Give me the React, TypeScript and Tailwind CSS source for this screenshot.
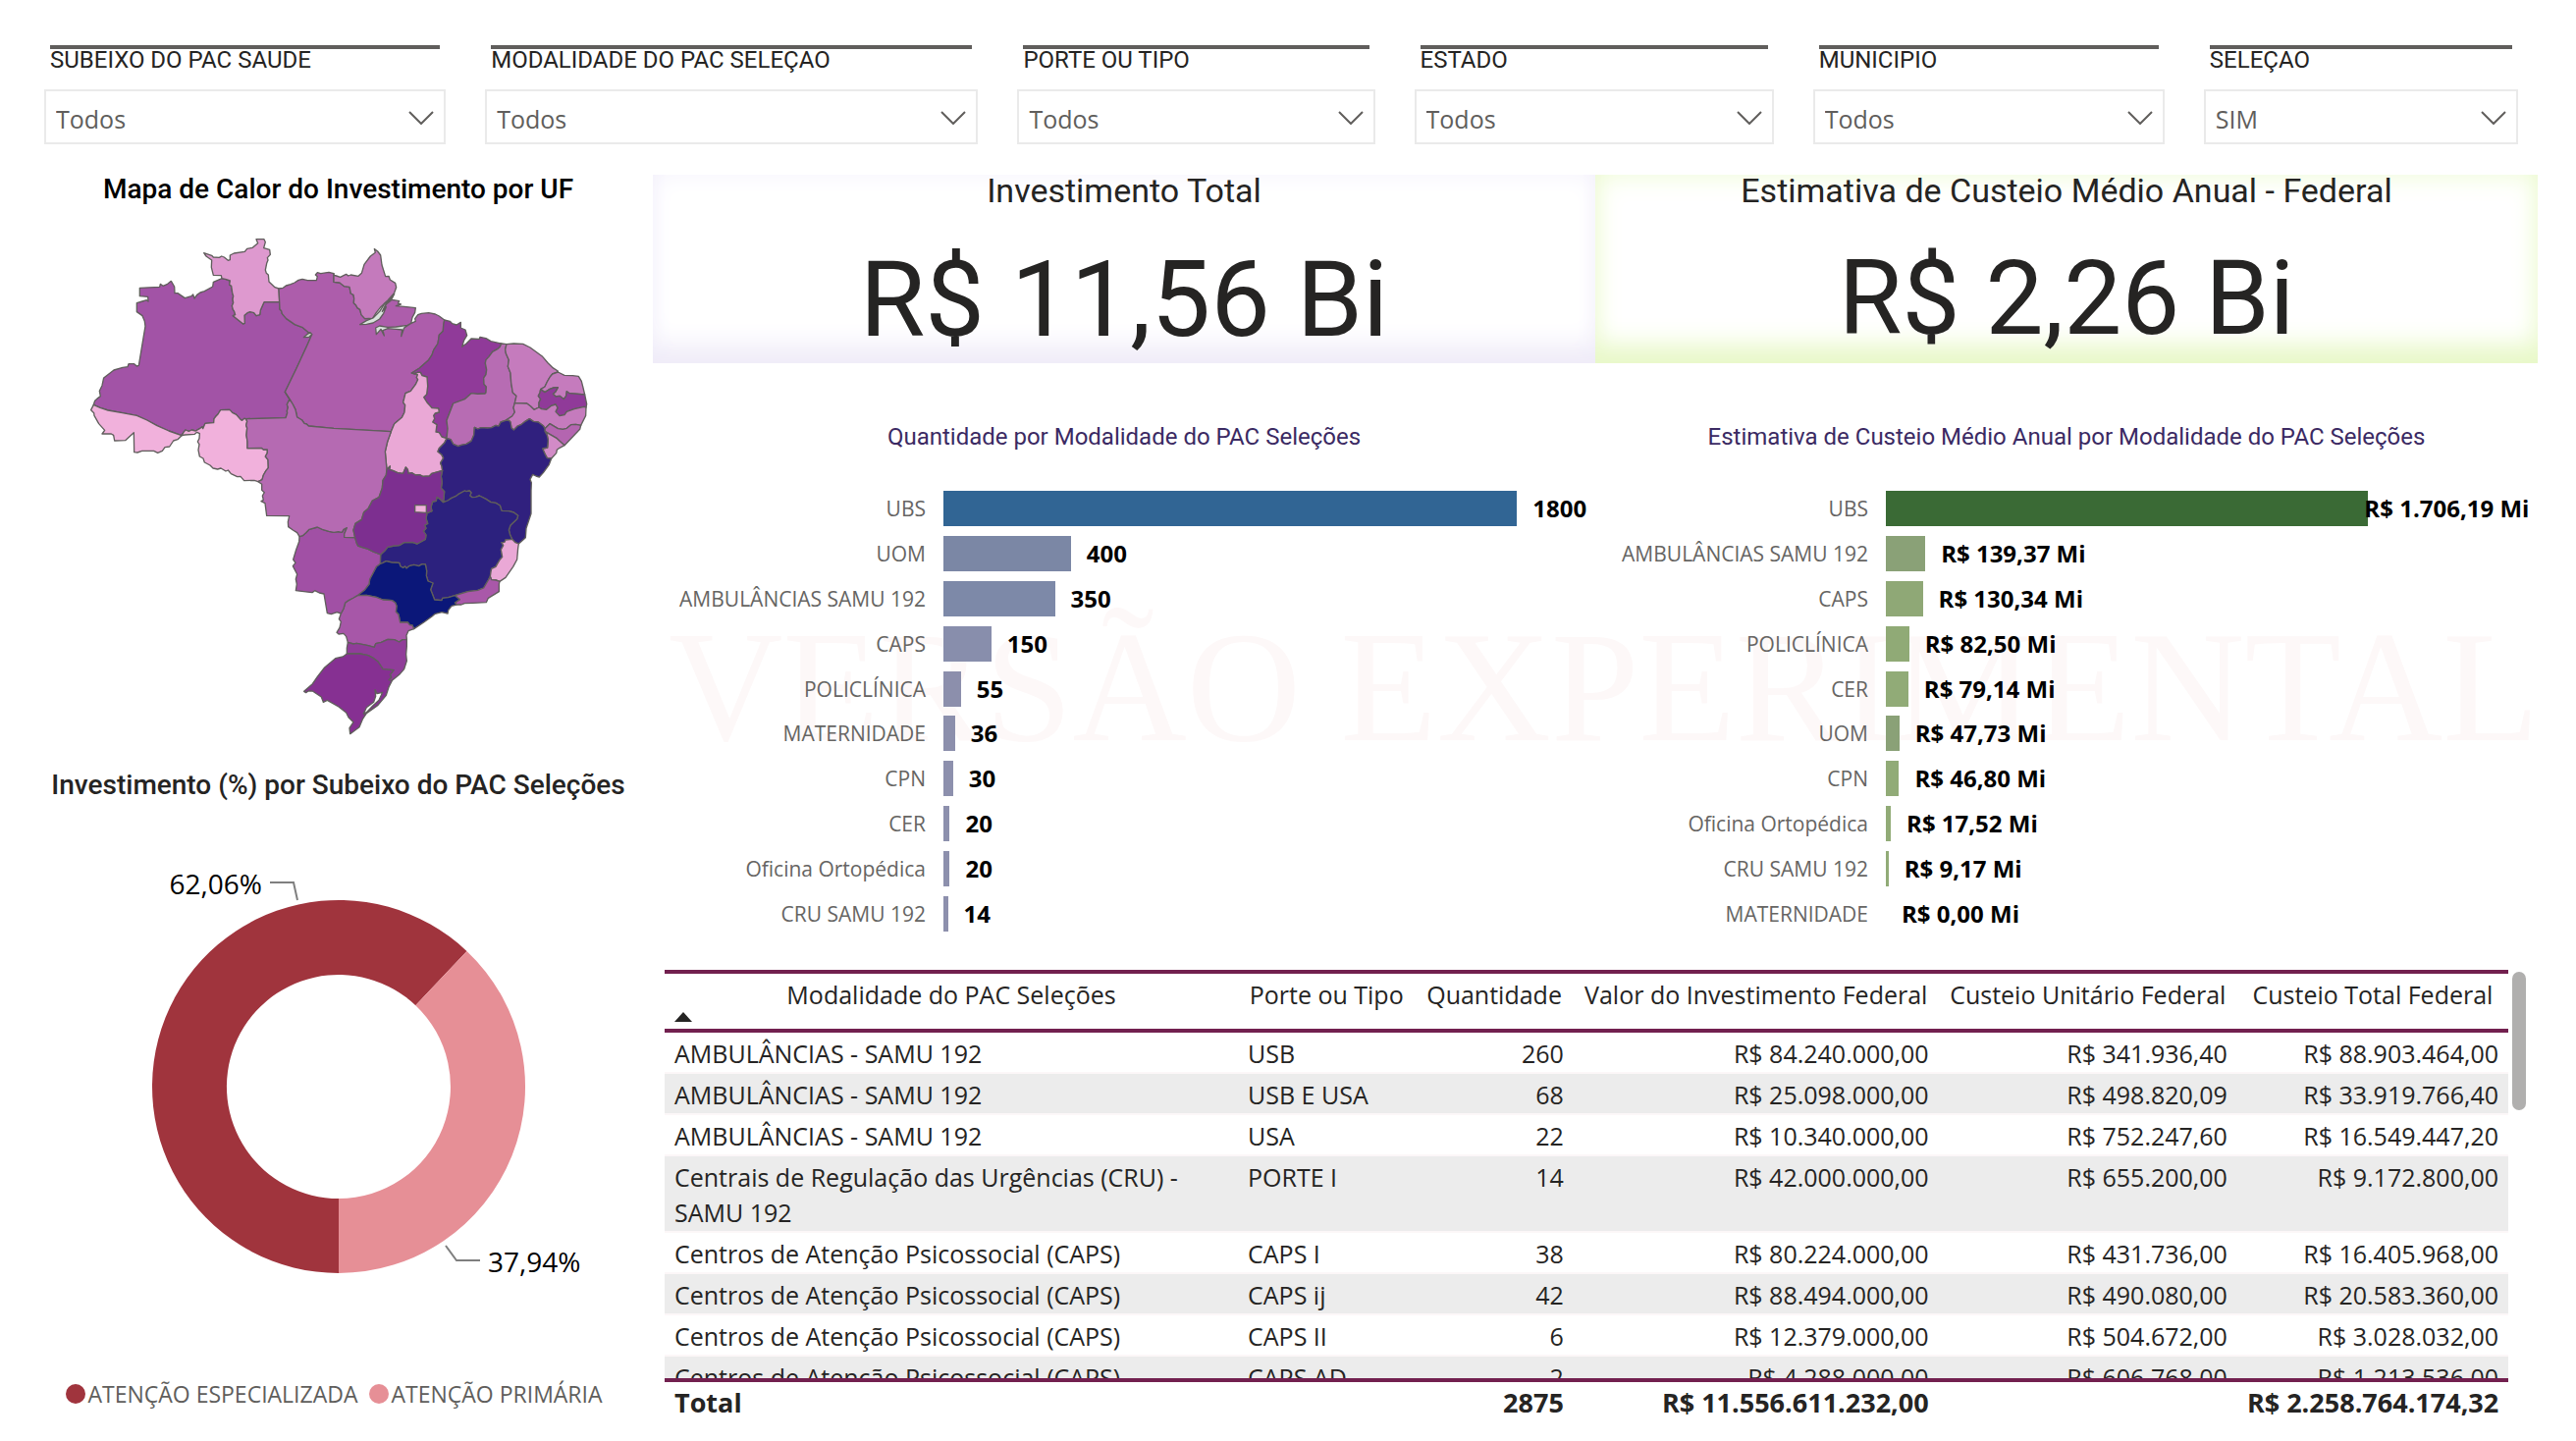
import { useId } from "react";

type Point = [number, number];

const parse = (text: string, dx: number, dy: number): Point[] =>
  text
    .trim()
    .split(/\s+/)
    .map((pair) => {
      const [x, y] = pair.split(",").map(Number);
      return [x + dx, y + dy];
    });

// The outline is traced on three sheets that share one plane.
const west = (text: string) => parse(text, 0, 0);
const east = (text: string) => parse(text, 780, 0);
const south = (text: string) => parse(text, 540, 750);
const back = (line: Point[]) => [...line].reverse();
const outline = (...lines: Point[][]) => "M" + lines.flat().map((p) => p.join(" ")).join("L") + "Z";

// Borders shared by two states.
const amAc = west("46,547 66,556 90,564 134,572 178,580 209,594 240,611 276,627 315,641");
const amRo = west("315,641 321,631 327,624 337,628 346,624 358,627 370,620 378,614 380,620 387,604 413,602 414,590 420,582 426,576 434,563 462,562 470,571 482,577 495,592 500,595 507,589 512,590");
const amRr = west("438,161 449,163 463,168 461,180 467,184 470,205 473,215 471,225 473,235 469,245 472,256 476,262 479,272 472,275 487,287 503,300 508,298 507,274 516,266 524,263 536,266 543,275 554,272 556,258 567,233 614,233");
const amPa = west("614,233 615,255 620,260 622,269 635,284 648,293 661,302 685,311 705,328 713,332 700,362 666,436 631,508");
const paMtW = west("645,530 655,546 663,562 668,585 683,594 690,604 697,606 703,612 780,619 955,629");
const amMt = west("631,508 645,530 637,546 640,555 637,566 638,572 633,587 512,590");
const roMt = west("512,590 515,598 512,610 515,618 513,640 516,660 516,680 559,679 565,684 577,684 577,694 571,705 579,715 580,740 573,748 565,762 561,776 549,782");
const paAp = east("0,146 0,172 18,174 32,185 48,187 52,207 60,211 62,222 61,236 68,243 72,251 80,256 84,272 95,284 107,283 118,284");
const paMa = east("338,288 335,305 334,322 322,334 318,360 305,380 300,395 290,410 262,435 238,450");
const paTo = east("238,450 256,455 253,464 257,470 250,485 235,505 219,512 212,540 218,548 216,570 208,586 185,605 175,629");
const maTo = east("238,450 246,452 257,448 265,448 270,458 285,462 287,490 284,515 275,524 285,540 294,550 300,557 320,558 322,570 310,573 305,580 308,590 302,600 315,608 312,630 322,632 330,645 345,650");
const maPi = east("512,360 508,370 500,377 485,385 474,400 465,410 463,420 467,440 465,455 458,465 459,484 466,492 465,510 462,513 440,514 420,512 400,530 365,543 360,556 345,595 348,620 345,650");
const toBa = east("345,650 338,664 322,680 318,690 330,700 335,710 326,725 330,735 332,748");
const toGo = east("332,748 300,757 292,765 272,766 262,761 250,762 238,755 228,757 226,745 220,738 212,757 195,755 180,748 170,745 172,735 162,745");
const mtTo = east("162,745 157,690 164,660 175,629");
const piCe = east("528,362 524,378 526,390 535,410 532,430 540,450 542,480 547,510 558,520 553,542");
const piPe = east("553,542 549,556 553,570 545,582 525,595");
const piBa = east("525,595 510,600 504,612 495,610 482,617 470,618 450,617 440,621 430,616 428,640 420,658 405,667 390,670 380,674 365,667 357,653 345,650");
const cePe = east("553,542 590,543 601,551 612,562 627,555");
const ceRn = east("685,447 668,453 660,463 652,477 645,492 632,500");
const cePb = east("632,500 630,510 625,520 632,530 627,540 627,555");
const rnPb = east("632,500 645,509 660,499 672,495 685,494 677,508 670,514 678,522 690,520 703,530 710,520 712,506 720,512 767,516");
const pbPe = east("627,555 635,560 650,562 665,550 678,546 684,556 678,568 690,581 705,578 712,568 735,560 765,553 771,555");
const peAl = east("755,610 740,607 725,608 712,619 700,622 685,620 670,611 660,605 645,620");
const peBa = east("645,620 640,611 625,600 610,598 598,590 585,598 572,608 562,612 550,624 543,618 540,600 535,595 525,595");
const alSe = east("645,628 665,640 682,650 690,658 705,671");
const seBa = east("645,628 652,640 655,655 653,678 638,681 645,697 652,710 665,711");
const baGo = south("572,-2 568,16 571,34 568,52 578,62 575,95");
const baMg = south("575,95 588,90 600,82 612,77 620,71 640,60 645,62 655,60 660,66 656,75 663,80 674,79 685,75 705,85 720,95 735,97 748,105 753,121 775,122 790,126 803,136 800,146 780,165 775,180 779,195 785,208");
const baEs = south("785,208 795,218 805,222");
const mgEs = south("785,208 765,210 762,217 753,218 758,227 751,240 755,262 748,270 740,283 735,292 722,298 720,308 718,322");
const mgRj = south("718,322 712,333 705,345 698,357 680,364 650,368 630,374 610,380");
const mgSp = south("610,380 590,386 572,388 570,395 548,393 540,372 536,362 543,342 528,336 523,320 524,305 520,285 510,284 500,290 485,286 470,290 462,297 458,291 452,295 444,291 440,280 418,279 400,275 390,280 382,283");
const mgMs = south("382,283 383,255");
const mgGo = south("383,255 395,244 405,232 425,228 440,227 455,218 480,217 495,222 520,208 522,195 514,183 522,175 518,165 527,160 522,145 525,128 540,122 537,110 542,93 553,91 555,79 566,86 575,95");
const goMs = south("383,255 360,246 345,238 325,232 314,228 310,220 305,203");
const mtMs = south("305,203 272,202 272,192 280,173 270,178 265,187 254,185 240,187 225,184 205,178 190,171 165,178 155,188 145,197 135,200");
const mtGo = south("305,203 300,180 306,160 325,148 332,125 345,115 358,90 378,80 388,52 390,28 400,12 402,-5");
const esRj = south("747,337 735,333 722,332 718,322");
const spRj = south("610,380 625,392 610,402 615,408");
const spMs = south("382,283 370,292 358,315 350,330 348,345 335,362 312,380");
const spPr = south("312,380 340,379 370,385 390,393 418,395 428,402 432,412 430,430 438,438 443,462 466,462 472,470 480,471 485,482");
const prMs = south("312,380 300,387 285,395 275,402 270,420 262,435");
const prSc = south("463,515 450,515 440,522 425,515 405,514 385,523 368,527 364,538 345,533 330,530 310,526 300,528 283,523");
const scRs = south("280,558 320,558 345,563 362,572 375,582 383,594 390,605 423,608 412,622 416,630 408,638 418,640");

const ocean = {
  ap: east("0,151 8,153 20,157 30,152 38,148 44,153 52,150 75,154 85,145 93,118 112,93 127,82 124,71 134,78 143,90 147,120 158,155 168,154 172,165 188,175 191,188 185,205 165,228 142,250 130,265 118,284"),
  pa: east("118,284 130,275 142,262 155,250 160,240 178,226 200,230 196,237 205,240 190,245 215,247 250,251 248,265 240,280 236,298 250,292 248,284 257,272 268,268 290,266 310,270 322,276 338,288"),
  ma: east("338,288 355,292 362,299 375,303 388,295 388,312 402,318 407,335 398,350 392,370 405,360 420,345 445,346 447,340 465,344 480,353 512,360"),
};

const states: { name: string; fill: string; d: string }[] = [
  { name: "Amazonas", fill: "#a253a6", d: outline(west("46,547 50,535 60,526 67,521 64,505 72,488 77,465 108,441 135,433 150,431 153,422 170,422 178,429 184,427 191,385 204,307 202,292 195,275 178,263 178,236 195,231 208,227 213,231 212,217 187,215 187,190 248,187 250,178 258,184 272,178 283,169 293,186 294,206 303,206 325,221 345,215 350,210 354,222 362,211 372,204 385,200 410,186 412,172 438,161"), amRr, amPa, amMt, back(amRo), back(amAc)) },
  { name: "Acre", fill: "#f1b1dc", d: outline(amAc, west("303,653 290,657 278,675 264,677 256,688 242,694 230,688 194,688 180,693 170,692 169,632 155,645 143,656 110,657 107,640 100,636 72,636 80,625 62,605 48,580 47,572 38,563")) },
  { name: "Rondônia", fill: "#f1b1dc", d: outline(amRo, roMt, west("537,778 506,779 495,766 485,767 466,758 457,747 450,750 435,741 425,744 411,741 402,732 385,723 381,711 370,705 366,685 369,668 364,660 369,650 370,635 362,631 355,637 325,639")) },
  { name: "Roraima", fill: "#de99cf", d: outline(amRr, west("612,192 600,188 582,171 580,150 574,145 571,135 575,115 579,105 577,98 586,88 584,73 566,68 571,50 567,41 543,41 548,53 532,67 515,70 508,79 475,84 463,90 463,104 457,106 445,96 437,93 430,97 412,96 407,91 383,83 390,93 407,105 406,127 412,151 436,152")) },
  { name: "Pará", fill: "#ad5dab", d: outline(west("612,192 625,190 634,183 648,179 660,174 672,166 684,163 700,167 727,167 730,155 724,150 730,143 740,146 765,142"), paAp, ocean.pa, paMa, paTo, back(paMtW), back(amPa)) },
  { name: "Amapá", fill: "#c47abc", d: outline(ocean.ap, back(paAp)) },
  { name: "Maranhão", fill: "#903a99", d: outline(ocean.ma, maPi, back(maTo), back(paMa)) },
  { name: "Tocantins", fill: "#eaa8d6", d: outline(maTo, toBa, toGo, mtTo, back(paTo)) },
  { name: "Piauí", fill: "#b76cb3", d: outline(east("512,360 528,362"), piCe, piPe, piBa, back(maPi)) },
  { name: "Ceará", fill: "#c57bbd", d: outline(east("528,362 550,360 578,361 600,372 638,400 655,420 668,433 685,444"), ceRn, cePb, back(cePe), back(piCe)) },
  { name: "Rio Grande do Norte", fill: "#c57bbd", d: outline(east("685,447 705,457 730,458 748,460 757,475 762,495 767,516"), back(rnPb), back(ceRn)) },
  { name: "Paraíba", fill: "#903a99", d: outline(rnPb, east("773,545 771,555"), back(pbPe), back(cePb)) },
  { name: "Pernambuco", fill: "#c57bbd", d: outline(cePe, pbPe, east("770,580 755,610"), peAl, peBa, back(piPe)) },
  { name: "Alagoas", fill: "#b465b0", d: outline(peAl, alSe, east("725,650 752,622")) },
  { name: "Sergipe", fill: "#d28bc7", d: outline(alSe, east("690,679 682,685 680,695 665,711"), back(seBa)) },
  { name: "Bahia", fill: "#30207e", d: outline(back(piBa), back(peBa), seBa, east("658,730 640,755 628,768 618,765 608,760 600,775 604,785 603,810"), south("843,100 843,130 828,175 826,203 805,222"), back(baEs), back(baMg), back(baGo), back(toBa)) },
  { name: "Minas Gerais", fill: "#2c217e", d: outline(baMg, mgEs, mgRj, mgSp, mgMs, mgGo) },
  { name: "Espírito Santo", fill: "#eaa8d6", d: outline(back(mgEs), baEs, south("803,235 800,270 788,292 765,325"), esRj) },
  { name: "Rio de Janeiro", fill: "#a958a9", d: outline(mgRj, spRj, south("630,408 640,404 665,403 706,401 712,388 745,368 745,345"), esRj) },
  { name: "São Paulo", fill: "#0b1779", d: outline(back(mgSp), spRj, south("600,412 590,425 588,435 570,431 550,436 540,444 515,462 485,482"), back(spPr), back(spMs)) },
  { name: "Paraná", fill: "#a757a8", d: outline(spPr, south("468,488 462,502 463,515"), prSc, south("278,505 270,496 255,498 249,493 258,478 262,460 256,452 262,435"), back(prMs)) },
  { name: "Santa Catarina", fill: "#903d99", d: outline(prSc, south("280,540 280,558"), scRs, south("440,622 455,605 463,580 461,560 463,535")) },
  { name: "Rio Grande do Sul", fill: "#863092", d: outline(scRs, south("408,660 400,685 375,715 340,740 328,758 318,782 290,803 288,785 300,767 285,752 278,738 255,720 220,700 208,706 202,690 175,672 162,672 155,677 149,673 175,650 190,628 212,600 245,572 268,567")) },
  { name: "Mato Grosso do Sul", fill: "#a150a5", d: outline(back(mtMs), back(goMs), back(mgMs), spMs, prMs, south("250,431 232,437 220,434 210,375 196,372 182,365 174,371 124,365 127,345 124,330 128,315 115,290 123,280 116,270 125,240 134,215")) },
  { name: "Mato Grosso", fill: "#b56ab2", d: outline(back(amMt), paMtW, back(mtTo), back(mtGo), mtMs, south("128,188 115,180 101,170 100,155 104,137 35,136 30,98 18,92 25,88 22,75 28,65 20,58 20,40 9,32"), back(roMt)) },
  { name: "Goiás", fill: "#7d2f90", d: outline(back(toGo), baGo, back(mgGo), goMs, mtGo) },
  { name: "Distrito Federal", fill: "#f1b1dc", d: outline(south("488,104 523,104 523,127 488,125")) },
  { name: "Foz do Amazonas", fill: "#d9e3dc", d: outline(east("185,208 172,224 155,238 140,262 120,282 100,290 80,302 100,301 120,297 140,285 152,268 160,248 148,262 160,238 178,222")) },
  { name: "Rio Pará", fill: "#d9e3dc", d: outline(east("236,298 215,312 206,338 209,318 190,316 165,314 150,320 154,336 144,316 130,332 128,312 140,306 165,310 190,309 225,304")) },
  { name: "Lagoa Mirim", fill: "#c9cfc9", d: outline(west("713,332 705,340 688,341 698,332 708,326")) },
  { name: "Lagoa dos Patos", fill: "#ffffff", d: outline(south("366,668 372,680 389,676 378,700 360,716 340,737 331,742 340,722 362,706 368,688")) },
];

const filters = [
  ["SUBEIXO DO PAC SAUDE", "Todos"],
  ["MODALIDADE DO PAC SELEÇAO", "Todos"],
  ["PORTE OU TIPO", "Todos"],
  ["ESTADO", "Todos"],
  ["MUNICIPIO", "Todos"],
  ["SELEÇAO", "SIM"],
];

type Bar = { label: string; value: number; text: string; color: string };

const quantities: Bar[] = [
  { label: "UBS", value: 1800, text: "1800", color: "#316594" },
  { label: "UOM", value: 400, text: "400", color: "#7b87a5" },
  { label: "AMBULÂNCIAS SAMU 192", value: 350, text: "350", color: "#7d89a8" },
  { label: "CAPS", value: 150, text: "150", color: "#888eac" },
  { label: "POLICLÍNICA", value: 55, text: "55", color: "#8c8fac" },
  { label: "MATERNIDADE", value: 36, text: "36", color: "#8c8fac" },
  { label: "CPN", value: 30, text: "30", color: "#8d90ad" },
  { label: "CER", value: 20, text: "20", color: "#8d90ad" },
  { label: "Oficina Ortopédica", value: 20, text: "20", color: "#8d90ad" },
  { label: "CRU SAMU 192", value: 14, text: "14", color: "#8d90ad" },
];

const costs: Bar[] = [
  { label: "UBS", value: 1706.19, text: "R$ 1.706,19 Mi", color: "#3a6a35" },
  { label: "AMBULÂNCIAS SAMU 192", value: 139.37, text: "R$ 139,37 Mi", color: "#8aa177" },
  { label: "CAPS", value: 130.34, text: "R$ 130,34 Mi", color: "#8fa876" },
  { label: "POLICLÍNICA", value: 82.5, text: "R$ 82,50 Mi", color: "#90aa76" },
  { label: "CER", value: 79.14, text: "R$ 79,14 Mi", color: "#91ab77" },
  { label: "UOM", value: 47.73, text: "R$ 47,73 Mi", color: "#8aa177" },
  { label: "CPN", value: 46.8, text: "R$ 46,80 Mi", color: "#91ab77" },
  { label: "Oficina Ortopédica", value: 17.52, text: "R$ 17,52 Mi", color: "#91ab77" },
  { label: "CRU SAMU 192", value: 9.17, text: "R$ 9,17 Mi", color: "#91ab77" },
  { label: "MATERNIDADE", value: 0, text: "R$ 0,00 Mi", color: "#91ab77" },
];

const rows = [
  ["AMBULÂNCIAS - SAMU 192", "USB", "260", "R$ 84.240.000,00", "R$ 341.936,40", "R$ 88.903.464,00"],
  ["AMBULÂNCIAS - SAMU 192", "USB E USA", "68", "R$ 25.098.000,00", "R$ 498.820,09", "R$ 33.919.766,40"],
  ["AMBULÂNCIAS - SAMU 192", "USA", "22", "R$ 10.340.000,00", "R$ 752.247,60", "R$ 16.549.447,20"],
  ["Centrais de Regulação das Urgências (CRU) - SAMU 192", "PORTE I", "14", "R$ 42.000.000,00", "R$ 655.200,00", "R$ 9.172.800,00"],
  ["Centros de Atenção Psicossocial (CAPS)", "CAPS I", "38", "R$ 80.224.000,00", "R$ 431.736,00", "R$ 16.405.968,00"],
  ["Centros de Atenção Psicossocial (CAPS)", "CAPS ij", "42", "R$ 88.494.000,00", "R$ 490.080,00", "R$ 20.583.360,00"],
  ["Centros de Atenção Psicossocial (CAPS)", "CAPS II", "6", "R$ 12.379.000,00", "R$ 504.672,00", "R$ 3.028.032,00"],
  ["Centros de Atenção Psicossocial (CAPS)", "CAPS AD", "2", "R$ 4.288.000,00", "R$ 606.768,00", "R$ 1.213.536,00"],
];

const headings = ["Modalidade do PAC Seleções", "Porte ou Tipo", "Quantidade", "Valor do Investimento Federal", "Custeio Unitário Federal", "Custeio Total Federal"];
const totals = ["Total", "", "2875", "R$ 11.556.611.232,00", "", "R$ 2.258.764.174,32"];

function Filter({ label, value }: { label: string; value: string }) {
  const id = useId();
  return (
    <div>
      <label htmlFor={id} className="mx-1.5 block border-t-4 border-[#605e5c] font-[Roboto,sans-serif] text-2xl leading-[22px] whitespace-nowrap text-[#252423]">
        {label}
      </label>
      <div className="relative mt-[19px]">
        <select id={id} defaultValue={value} className="h-14 w-full appearance-none border-2 border-[#eaeaea] bg-white pt-1.5 pl-2.5 text-[25px] text-[#605e5c]">
          <option>{value}</option>
        </select>
        <svg viewBox="0 0 26 14" className="pointer-events-none absolute top-[22px] right-3 h-3.5 w-6.5" fill="none" stroke="#605e5c" strokeWidth="2" aria-hidden="true">
          <path d="M1 1 13 13 25 1" />
        </svg>
      </div>
    </div>
  );
}

function BarChart({ title, data, share }: { title: string; data: Bar[]; share: number }) {
  const top = data[0].value;
  return (
    <section>
      <h2 className="text-center font-[Roboto,sans-serif] text-2xl leading-8 text-[#3b2a63]">{title}</h2>
      <ul className="mt-[34px] grid h-[459px] grid-rows-10">
        {data.map((bar) => {
          const width = (bar.value / top) * share;
          return (
            <li key={bar.label} className="grid grid-cols-[278fr_682fr] items-center">
              <span className="text-right text-[21px] leading-8 whitespace-nowrap text-[#666563]">{bar.label}</span>
              <div className="ml-[18px] flex items-center">
                <span className="h-9 shrink-0" style={{ width: `${width}%`, backgroundColor: bar.color }} />
                <span className={`z-10 text-2xl leading-8 font-bold whitespace-nowrap text-black ${bar.text.length > 13 ? "-ml-1" : "ml-4"}`}>{bar.text}</span>
              </div>
            </li>
          );
        })}
      </ul>
    </section>
  );
}

function Donut() {
  return (
    <svg viewBox="0 0 641 480" className="mt-10 w-full" role="img" aria-label="Investimento por subeixo">
      <g transform="translate(321 247)">
        <path fill="#a0343d" d="M0 190A190 190 0 1 1 130.5-138.1L78.3-82.8A114 114 0 1 0 0 114Z" />
        <path fill="#e68f96" d="M130.5-138.1A190 190 0 0 1 0 190V114A114 114 0 0 0 78.3-82.8Z" />
      </g>
      <g fill="none" stroke="#7f7f7f" strokeWidth="2">
        <path d="M251 39H275L279 57" />
        <path d="M430 409 441 424H465" />
      </g>
      <g className="text-[28px]" fill="#000">
        <text x="243" y="51" textAnchor="end">62,06%</text>
        <text x="473" y="436">37,94%</text>
      </g>
    </svg>
  );
}

function Legend({ color, children }: { color: string; children: string }) {
  return (
    <li className="flex items-center gap-0.5">
      <span className="size-5 rounded-full" style={{ backgroundColor: color }} />
      {children}
    </li>
  );
}

export default function App() {
  return (
    <div className="min-h-screen bg-white pt-[46px] pb-5 font-['Open_Sans',sans-serif] text-[#252423]">
      <header className="grid grid-cols-[409fr_502fr_364fr_366fr_358fr_320fr] gap-10 pr-[59px] pl-[45px]">
        {filters.map(([label, value]) => (
          <Filter key={label} label={label} value={value} />
        ))}
      </header>

      <main className="mt-[31px] grid grid-cols-[665fr_1920fr] pr-[39px]">
        <aside className="flex flex-col pl-6">
          <h2 className="text-center font-[Roboto,sans-serif] text-[28px] leading-[30px] font-medium text-black">Mapa de Calor do Investimento por UF</h2>
          <svg viewBox="0 0 1587 1560" className="mx-auto mt-[22px] h-[520px]" role="img" aria-label="Mapa de calor do Brasil">
            <g stroke="#605e5c" strokeWidth="4" strokeLinejoin="round">
              {states.map((state) => (
                <path key={state.name} d={state.d} fill={state.fill} />
              ))}
            </g>
          </svg>
          <h2 className="mt-[30px] text-center font-[Roboto,sans-serif] text-[28px] leading-10 font-medium whitespace-nowrap">Investimento (%) por Subeixo do PAC Seleções</h2>
          <Donut />
          <ul className="mt-auto mb-2.5 flex justify-center gap-3 pr-2 text-[23px] leading-9 whitespace-nowrap text-[#605e5c]">
            <Legend color="#a0343d">ATENÇÃO ESPECIALIZADA</Legend>
            <Legend color="#e68f96">ATENÇÃO PRIMÁRIA</Legend>
          </ul>
        </aside>

        <div className="relative isolate min-w-0">
          <div className="grid grid-cols-2 text-center font-[Roboto,sans-serif]">
            <section className="h-48 shadow-[inset_0_-28px_28px_-10px_#efebf8,inset_0_0_24px_#f5f3fc]">
              <h2 className="text-[34px] leading-8">Investimento Total</h2>
              <p className="text-[108px] leading-[190px]">R$ 11,56 Bi</p>
            </section>
            <section className="h-48 shadow-[inset_0_-28px_28px_-10px_#e8f8c8,inset_0_0_28px_#eefbd4]">
              <h2 className="text-[34px] leading-8">Estimativa de Custeio Médio Anual - Federal</h2>
              <p className="text-[105px] leading-[190px]">R$ 2,26 Bi</p>
            </section>
          </div>

          <p className="absolute inset-x-0 top-[432px] -z-10 pl-4 text-center font-['Liberation_Serif',serif] text-[161px] leading-[180px] whitespace-nowrap text-[#fdf8f8]">VERSÃO EXPERIMENTAL</p>

          <div className="mt-[59px] grid grid-cols-2">
            <BarChart title="Quantidade por Modalidade do PAC Seleções" data={quantities} share={88} />
            <BarChart title="Estimativa de Custeio Médio Anual por Modalidade do PAC Seleções" data={costs} share={74} />
          </div>

          <div className="mt-[34px] mr-3 ml-3 flex gap-1">
            <div className="h-[460px] min-w-0 flex-1 overflow-y-auto [scrollbar-width:none]">
              <table className="w-full table-fixed border-separate border-spacing-0 text-[25px] leading-9">
                <colgroup>
                  <col className="w-[31.1%]" />
                  <col className="w-[9.6%]" />
                  <col className="w-[8.6%]" />
                  <col className="w-[19.8%]" />
                  <col className="w-[16.2%]" />
                  <col className="w-[14.7%]" />
                </colgroup>
                <thead>
                  <tr>
                    {headings.map((heading, i) => (
                      <th key={heading} className="sticky top-0 h-16 border-y-4 border-[#72204f] bg-white p-0 align-top font-normal whitespace-nowrap" aria-sort={i === 0 ? "ascending" : undefined}>
                        <button type="button" className="flex h-14 w-full flex-col items-start pt-[3px]">
                          <span className="w-full text-center">{heading}</span>
                          {i === 0 && (
                            <svg viewBox="0 0 18 10" className="ml-2.5 h-2.5 w-4.5" aria-hidden="true">
                              <path d="M0 10 9 0 18 10Z" fill="#252423" />
                            </svg>
                          )}
                        </button>
                      </th>
                    ))}
                  </tr>
                </thead>
                <tbody>
                  {rows.map((row) => (
                    <tr key={row[0] + row[1]} className="even:bg-[#ececec]">
                      {row.map((cell, i) => (
                        <td key={i} className={`border-b-2 border-[#fcf7f8] px-2.5 pt-[3px] pb-px align-top ${i < 2 ? "text-left" : "text-right whitespace-nowrap"}`}>
                          {cell}
                        </td>
                      ))}
                    </tr>
                  ))}
                </tbody>
                <tfoot>
                  <tr>
                    {totals.map((cell, i) => (
                      <td key={i} className={`sticky bottom-0 border-t-4 border-[#72204f] bg-white px-2.5 pt-[3px] pb-px text-[27px] font-bold whitespace-nowrap ${i < 2 ? "text-left" : "text-right"}`}>
                        {cell}
                      </td>
                    ))}
                  </tr>
                </tfoot>
              </table>
            </div>
            <div className="mt-0.5 h-[141px] w-3.5 rounded-full bg-[#b0afae]" />
          </div>
        </div>
      </main>
    </div>
  );
}
